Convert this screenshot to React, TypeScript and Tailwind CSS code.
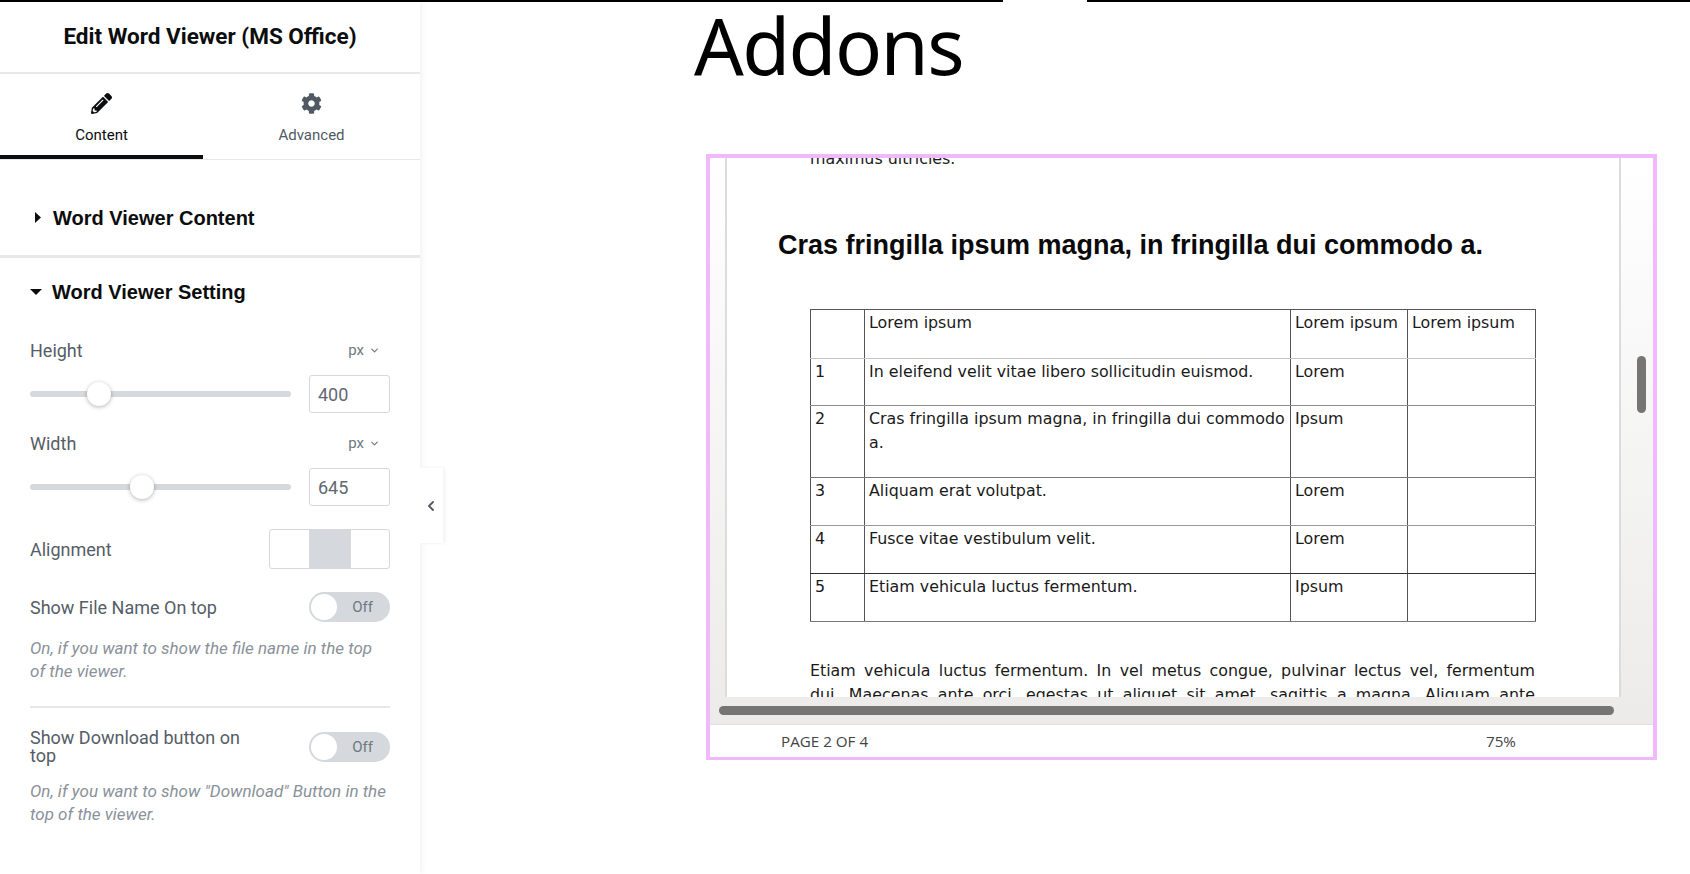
import React from 'react';
import { FaPencilAlt, FaCog } from 'react-icons/fa';
import { ChevronDown, ChevronLeft } from 'lucide-react';

const rows = [
  { no: '', title: 'Lorem ipsum', a: 'Lorem ipsum', b: 'Lorem ipsum', h: 'h-[49px]', line: 'border-b-[#c4c4c4]' },
  { no: '1', title: 'In eleifend velit vitae libero sollicitudin euismod.', a: 'Lorem', b: '', h: 'h-[47px]', line: 'border-b-[#8c8c8c]' },
  { no: '2', title: 'Cras fringilla ipsum magna, in fringilla dui commodo a.', a: 'Ipsum', b: '', h: 'h-[72px]', line: 'border-b-[#777777]' },
  { no: '3', title: 'Aliquam erat volutpat.', a: 'Lorem', b: '', h: 'h-[48px]', line: 'border-b-[#999999]' },
  { no: '4', title: 'Fusce vitae vestibulum velit.', a: 'Lorem', b: '', h: 'h-[48px]', line: 'border-b-[#333333]' },
  { no: '5', title: 'Etiam vehicula luctus fermentum.', a: 'Ipsum', b: '', h: 'h-[48px]', line: 'border-b-[#777777]' },
];

const SliderControl = ({ label, value, thumb }: { label: string; value: string; thumb: string }) => (
  <div className="h-[93px]">
    <div className="flex h-[26px] items-center justify-between pr-[10px]">
      <span className="text-[18px] text-[#555d66]">{label}</span>
      <span className="flex items-center gap-[5px] text-[15px] text-[#6d7882]">
        px
        <ChevronDown size={11} strokeWidth={2.5} />
      </span>
    </div>
    <div className="mt-[12px] flex items-center justify-between">
      <div className="relative h-[6px] w-[261px] rounded-full bg-[#d5d8dc]">
        <div className={`absolute top-[-9px] h-[24px] w-[24px] rounded-full bg-white shadow-[0_1px_4px_rgba(0,0,0,0.3)] ${thumb}`} />
      </div>
      <div className="flex h-[38px] w-[81px] items-center rounded-[3px] border border-[#d5d8dc] pl-[8px] text-[18px] text-[#5f6870]">
        {value}
      </div>
    </div>
  </div>
);

const Toggle = () => (
  <div className="flex h-[30px] w-[81px] shrink-0 items-center justify-between rounded-full bg-[#d5d8dc] pl-[2px] pr-[17px]">
    <div className="h-[26px] w-[26px] rounded-full bg-white" />
    <span className="text-[15px] text-[#6d7882]">Off</span>
  </div>
);

const Sidebar = () => (
  <aside className="relative z-10 h-[872px] w-[420px] shrink-0 bg-white font-['Roboto',sans-serif] shadow-[2px_0_6px_rgba(0,0,0,0.06)]">
    <div className="flex h-[72px] items-center justify-center border-b-2 border-[#e6e8ea] text-[22.5px] font-bold text-[#0c0d0e]">
      Edit Word Viewer (MS Office)
    </div>
    <div className="flex h-[86px] border-b border-[#e6e8ea]">
      <div className="flex h-[85px] w-[203px] flex-col items-center border-b-4 border-[#0c0d0e] pt-[19px] text-[#0c0d0e]">
        <FaPencilAlt size={21} />
        <span className="mt-[11px] text-[15px] leading-[20px]">Content</span>
      </div>
      <div className="flex flex-1 flex-col items-center pt-[19px] text-[#515962]">
        <FaCog size={21} />
        <span className="mt-[11px] text-[15px] leading-[20px]">Advanced</span>
      </div>
    </div>

    <div className="flex h-[98px] items-center gap-[10px] border-b-[3px] border-[#e6e8ea] pl-[34px] pt-[20px] font-['Liberation_Sans',sans-serif] text-[20px] font-bold text-[#0c0d0e]">
      <svg width="8" height="11" viewBox="0 0 8 11" className="mr-[1px]"><path d="M1 0l6 5.5L1 11z" fill="#0c0d0e" /></svg>
      Word Viewer Content
    </div>

    <div className="px-[30px]">
      <div className="flex h-[68px] items-center gap-[10px] font-['Liberation_Sans',sans-serif] text-[20px] font-bold text-[#0c0d0e]">
        <svg width="12" height="8" viewBox="0 0 12 8"><path d="M0 1h12L6 7z" fill="#0c0d0e" /></svg>
        Word Viewer Setting
      </div>
      <div className="mt-[11px]">
        <SliderControl label="Height" value="400" thumb="left-[57px]" />
        <SliderControl label="Width" value="645" thumb="left-[100px]" />
      </div>
      <div className="mt-[6px] flex h-[40px] items-center justify-between">
        <span className="text-[18px] text-[#555d66]">Alignment</span>
        <div className="flex h-[40px] w-[121px] overflow-hidden rounded-[3px] border border-[#d5d8dc]">
          <div className="w-[39px]" />
          <div className="w-[42px] bg-[#d5d8dc]" />
        </div>
      </div>
      <div className="mt-[23px] flex items-center justify-between">
        <span className="text-[18px] text-[#555d66]">Show File Name On top</span>
        <Toggle />
      </div>
      <p className="mt-[15px] text-[17px] italic leading-[23px] text-[#8a919a]">
        On, if you want to show the file name in the top of the viewer.
      </p>
      <div className="mt-[23px] h-[2px] bg-[#e6e8ea]" />
      <div className="mt-[21px] flex items-center justify-between">
        <span className="w-[220px] text-[18px] leading-[18px] text-[#555d66]">Show Download button on top</span>
        <Toggle />
      </div>
      <p className="mt-[15px] text-[17px] italic leading-[23px] text-[#8a919a]">
        On, if you want to show "Download" Button in the top of the viewer.
      </p>
    </div>

    {/* Collapse handle */}
    <div className="absolute left-[420px] top-[466px] flex h-[75px] w-[23px] items-center justify-center bg-white pr-[2px] text-[#515962] shadow-[2px_0_4px_rgba(0,0,0,0.06)]">
      <ChevronLeft size={16} strokeWidth={2.75} />
    </div>
  </aside>
);

const DocViewer = () => (
  <div className="flex h-[606px] w-[951px] flex-col border-[4px] border-b-[3px] border-[#f0b9fb] bg-white">
    <div className="relative h-[566px] bg-gradient-to-b from-white to-[#ecebea]">
      <div className="ml-[15px] h-[539px] w-[896px] overflow-hidden border-x-2 border-[#dcdcdc] bg-white pl-[83px] text-[#1a1a1a]">
        <p className="mt-[-9px] font-['DejaVu_Sans',sans-serif] text-[15.85px] leading-[20px]">maximus ultricies.</p>
        <h2 className="ml-[-32px] mt-[61px] whitespace-nowrap font-['Liberation_Sans',sans-serif] text-[27px] font-bold leading-[30px] text-[#0a0a0a]">
          Cras fringilla ipsum magna, in fringilla dui commodo a.
        </h2>
        <table className="mt-[49px] w-[725px] table-fixed border-collapse font-['DejaVu_Sans',sans-serif] text-[15.85px] leading-[23.5px]">
          <colgroup>
            <col className="w-[54px]" />
            <col className="w-[426px]" />
            <col className="w-[117px]" />
            <col className="w-[128px]" />
          </colgroup>
          <tbody>
            {rows.map((row) => (
              <tr key={row.no} className={row.h}>
                <td className={`border border-[#555555] pl-[4px] pt-[1px] align-top ${row.line}`}>{row.no}</td>
                <td className={`border border-[#555555] pl-[4px] pr-[2px] pt-[1px] align-top ${row.line}`}>{row.title}</td>
                <td className={`border border-[#555555] pl-[4px] pt-[1px] align-top ${row.line}`}>{row.a}</td>
                <td className={`border border-[#555555] pl-[4px] pt-[1px] align-top ${row.line}`}>{row.b}</td>
              </tr>
            ))}
          </tbody>
        </table>
        <p className="mt-[37px] w-[725px] font-['DejaVu_Sans',sans-serif] text-[15.85px] leading-[23.5px] [text-align-last:justify]">
          Etiam vehicula luctus fermentum. In vel metus congue, pulvinar lectus vel, fermentum<br />
          dui. Maecenas ante orci, egestas ut aliquet sit amet, sagittis a magna. Aliquam ante
        </p>
      </div>
      {/* Scrollbars */}
      <div className="absolute left-[9px] top-[548px] h-[9px] w-[895px] rounded-full bg-[#767574]" />
      <div className="absolute left-[927px] top-[198px] h-[57px] w-[9px] rounded-full bg-[#767574]" />
    </div>
    <div className="flex flex-1 items-center border-t border-[#e2e2e2] pl-[71px] font-['Open_Sans',sans-serif] text-[15.2px] text-[#444444]">
      <span className="w-[705px]">PAGE 2 OF 4</span>
      <span>75%</span>
    </div>
  </div>
);

export default function App() {
  return (
    <div className="h-[874px] w-[1690px] overflow-hidden bg-white">
      {/* Top rule with the gap */}
      <div className="flex h-[2px]">
        <div className="w-[1003px] bg-black" />
        <div className="w-[84px]" />
        <div className="flex-1 bg-black" />
      </div>
      <div className="flex">
        <Sidebar />
        <main className="min-w-0 flex-1 pl-[286px]">
          <div className="h-[152px]">
            <h1 className="ml-[-12px] font-['Noto_Sans',sans-serif] text-[78px] font-normal leading-[86px] tracking-[-1.6px] text-black">
              Addons
            </h1>
          </div>
          <DocViewer />
        </main>
      </div>
    </div>
  );
}
